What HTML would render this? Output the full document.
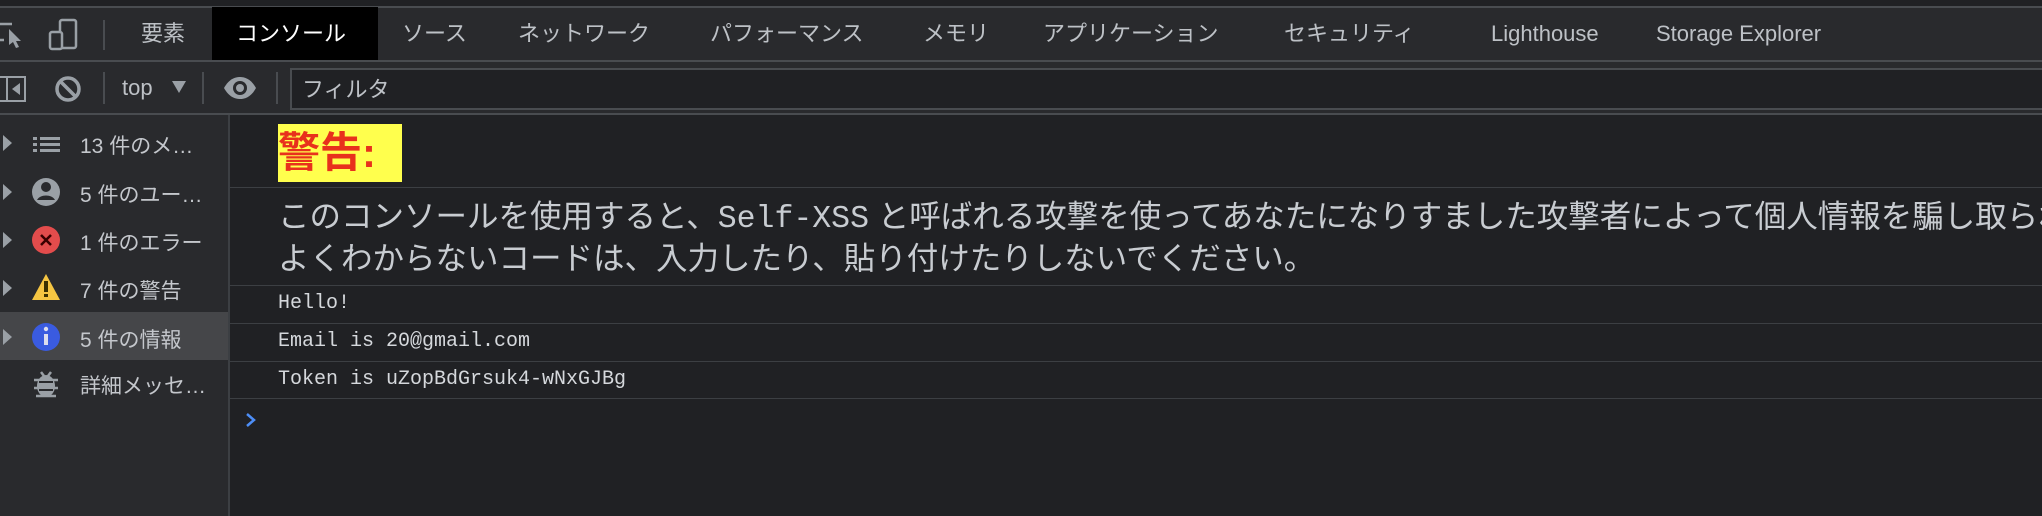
<!DOCTYPE html>
<html><head><meta charset="utf-8"><style>
*{margin:0;padding:0;box-sizing:border-box}
body{width:2042px;height:516px;background:#202124;position:relative;overflow:hidden;font-family:"Liberation Sans","Noto Sans CJK JP",sans-serif;color:#bdc1c6}
.a{position:absolute;white-space:nowrap}
.tab{position:absolute;top:7px;height:54px;line-height:54px;font-size:22px;color:#bdc1c6}
.hl{position:absolute;left:0;right:0;height:2px;background:#494c50}
.side{font-size:21px;color:#c4c7cc}
.mono{font-family:"Liberation Mono","DejaVu Sans Mono",monospace;font-size:20px;color:#d5d8dc;left:278px}
.ml{position:absolute;left:229px;right:0;height:1px;background:#3c3f43}
</style></head><body>
<div class="a" style="left:0;top:0;width:2042px;height:7px;background:#202124"></div>
<div class="hl" style="top:6px"></div>
<div class="a" style="left:0;top:8px;width:2042px;height:53px;background:#292a2d"></div>
<svg class="a" style="left:0;top:20px" width="28" height="30" viewBox="0 0 28 30"><path d="M0 4h12M0 20h4" stroke="#9aa0a6" stroke-width="2.5" fill="none"/><path d="M9 9l12 12-5 0 3 6-3 1-3-6-4 3z" fill="#9aa0a6"/></svg>
<svg class="a" style="left:48px;top:18px" width="34" height="34" viewBox="0 0 34 34"><rect x="12" y="2" width="16" height="28" rx="2" fill="none" stroke="#9aa0a6" stroke-width="2.5"/><rect x="2" y="14" width="12" height="17" rx="2" fill="#292a2d" stroke="#9aa0a6" stroke-width="2.5"/></svg>
<div class="a" style="left:103px;top:20px;width:2px;height:30px;background:#494c50"></div>
<div class="tab" style="left:141px">要素</div>
<div class="a" style="left:212px;top:7px;width:166px;height:54px;background:#000"></div>
<div class="tab" style="left:236px;color:#fff">コンソール</div>
<div class="tab" style="left:402px">ソース</div>
<div class="tab" style="left:518px">ネットワーク</div>
<div class="tab" style="left:710px">パフォーマンス</div>
<div class="tab" style="left:923px">メモリ</div>
<div class="tab" style="left:1043px">アプリケーション</div>
<div class="tab" style="left:1284px">セキュリティ</div>
<div class="tab" style="left:1491px">Lighthouse</div>
<div class="tab" style="left:1656px">Storage Explorer</div>
<div class="hl" style="top:60px"></div>
<div class="a" style="left:0;top:62px;width:2042px;height:52px;background:#292a2d"></div>
<svg class="a" style="left:0;top:75px" width="28" height="28" viewBox="0 0 28 28"><rect x="-2" y="2" width="27" height="24" fill="none" stroke="#9aa0a6" stroke-width="2"/><line x1="7" y1="2" x2="7" y2="26" stroke="#9aa0a6" stroke-width="2"/><path d="M20 8v12l-8-6z" fill="#9aa0a6"/></svg>
<svg class="a" style="left:54px;top:75px" width="28" height="28" viewBox="0 0 28 28"><circle cx="14" cy="14" r="11" fill="none" stroke="#9aa0a6" stroke-width="3.5"/><line x1="7" y1="7" x2="21" y2="21" stroke="#9aa0a6" stroke-width="3.5"/></svg>
<div class="a" style="left:103px;top:72px;width:2px;height:32px;background:#494c50"></div>
<div class="a" style="left:122px;top:74px;font-size:22px;line-height:28px;color:#bdc1c6">top</div>
<svg class="a" style="left:172px;top:81px" width="14" height="12"><path d="M0 0h14L7 12z" fill="#9aa0a6"/></svg>
<div class="a" style="left:202px;top:72px;width:2px;height:32px;background:#494c50"></div>
<svg class="a" style="left:223px;top:76px" width="34" height="24" viewBox="0 0 34 24"><path d="M1 12C6 3 12 1 17 1s11 2 16 11c-5 9-11 11-16 11S6 21 1 12z" fill="#9aa0a6"/><circle cx="17" cy="12" r="7" fill="#292a2d"/><circle cx="17" cy="12" r="4" fill="#9aa0a6"/></svg>
<div class="a" style="left:276px;top:72px;width:2px;height:32px;background:#494c50"></div>
<div class="a" style="left:290px;top:68px;width:1752px;height:42px;border:2px solid #494c50;border-right:none;background:#202124"></div>
<div class="a" style="left:302px;top:76px;font-size:22px;line-height:28px;color:#bdc1c6">フィルタ</div>
<div class="hl" style="top:113px"></div>
<div class="a" style="left:0;top:115px;width:229px;height:401px;background:#292a2d"></div>
<div class="a" style="left:228px;top:115px;width:2px;height:401px;background:#3c3f43"></div>
<div class="a" style="left:0;top:312px;width:228px;height:48px;background:#454649"></div>
<svg class="a" style="left:0;top:0" width="229" height="516">
<g fill="#9aa0a6">
<path d="M3 135l9 8-9 8z"/><path d="M3 184l9 8-9 8z"/><path d="M3 232l9 8-9 8z"/><path d="M3 280l9 8-9 8z"/><path d="M3 329l9 8-9 8z"/>
<rect x="33" y="137" width="4" height="3"/><rect x="40" y="137" width="20" height="3"/><rect x="33" y="143" width="4" height="3"/><rect x="40" y="143" width="20" height="3"/><rect x="33" y="149" width="4" height="3"/><rect x="40" y="149" width="20" height="3"/>
<circle cx="46" cy="192" r="14"/>
</g>
<circle cx="46" cy="187" r="5" fill="#292a2d"/><path d="M37 200c3-6 15-6 18 0" fill="#292a2d"/>
<circle cx="46" cy="240" r="14" fill="#e34c4c"/><path d="M41 235l10 10M51 235l-10 10" stroke="#3a0000" stroke-width="2.5"/>
<path d="M46 274l14 26H32z" fill="#f5c542"/><rect x="44" y="281" width="4" height="11" fill="#3a3000"/><rect x="44" y="294" width="4" height="3" fill="#3a3000"/>
<circle cx="46" cy="337" r="14" fill="#3a5be0"/><rect x="44" y="334" width="4" height="11" fill="#dde"/><circle cx="46" cy="329" r="2.2" fill="#dde"/>
<ellipse cx="46" cy="386" rx="9" ry="11" fill="#9aa0a6"/><path d="M34 380h24M34 388h24M36 396h20M41 372l3 4M51 372l-3 4" stroke="#9aa0a6" stroke-width="2.5"/><rect x="39" y="381" width="14" height="2" fill="#292a2d"/><rect x="39" y="389" width="14" height="2" fill="#292a2d"/>
</svg>
<div class="a side" style="left:80px;top:130px">13 件のメ…</div>
<div class="a side" style="left:80px;top:179px">5 件のユー…</div>
<div class="a side" style="left:80px;top:227px">1 件のエラー</div>
<div class="a side" style="left:80px;top:275px">7 件の警告</div>
<div class="a side" style="left:80px;top:324px">5 件の情報</div>
<div class="a side" style="left:80px;top:370px">詳細メッセ…</div>
<div class="a" style="left:278px;top:124px;width:124px;height:58px;background:#ffff4d"></div>
<div class="a" style="left:278px;top:124px;font-size:42px;line-height:58px;font-weight:bold;color:#e8311c">警告:</div>
<div class="ml" style="top:187px"></div>
<div class="a" style="left:230px;top:190px;width:1812px;height:94px;overflow:hidden">
<div class="a" style="left:48px;top:7px;font-size:31.5px;line-height:39px;color:#c8ccd1">このコンソールを使用すると、<span style="font-family:'Liberation Mono','DejaVu Sans Mono',monospace">Self-XSS</span> と呼ばれる攻撃を使ってあなたになりすました攻撃者によって個人情報を騙し取られる危険があります。<br>よくわからないコードは、入力したり、貼り付けたりしないでください。</div>
</div>
<div class="ml" style="top:285px"></div>
<div class="a mono" style="top:292px;line-height:24px">Hello!</div>
<div class="ml" style="top:323px"></div>
<div class="a mono" style="top:330px;line-height:24px">Email is 20@gmail.com</div>
<div class="ml" style="top:361px"></div>
<div class="a mono" style="top:368px;line-height:24px">Token is uZopBdGrsuk4-wNxGJBg</div>
<div class="ml" style="top:398px"></div>
<svg class="a" style="left:245px;top:412px" width="12" height="16"><path d="M2 2l7 6-7 6" stroke="#4d8ef7" stroke-width="2.5" fill="none"/></svg>
</body></html>
